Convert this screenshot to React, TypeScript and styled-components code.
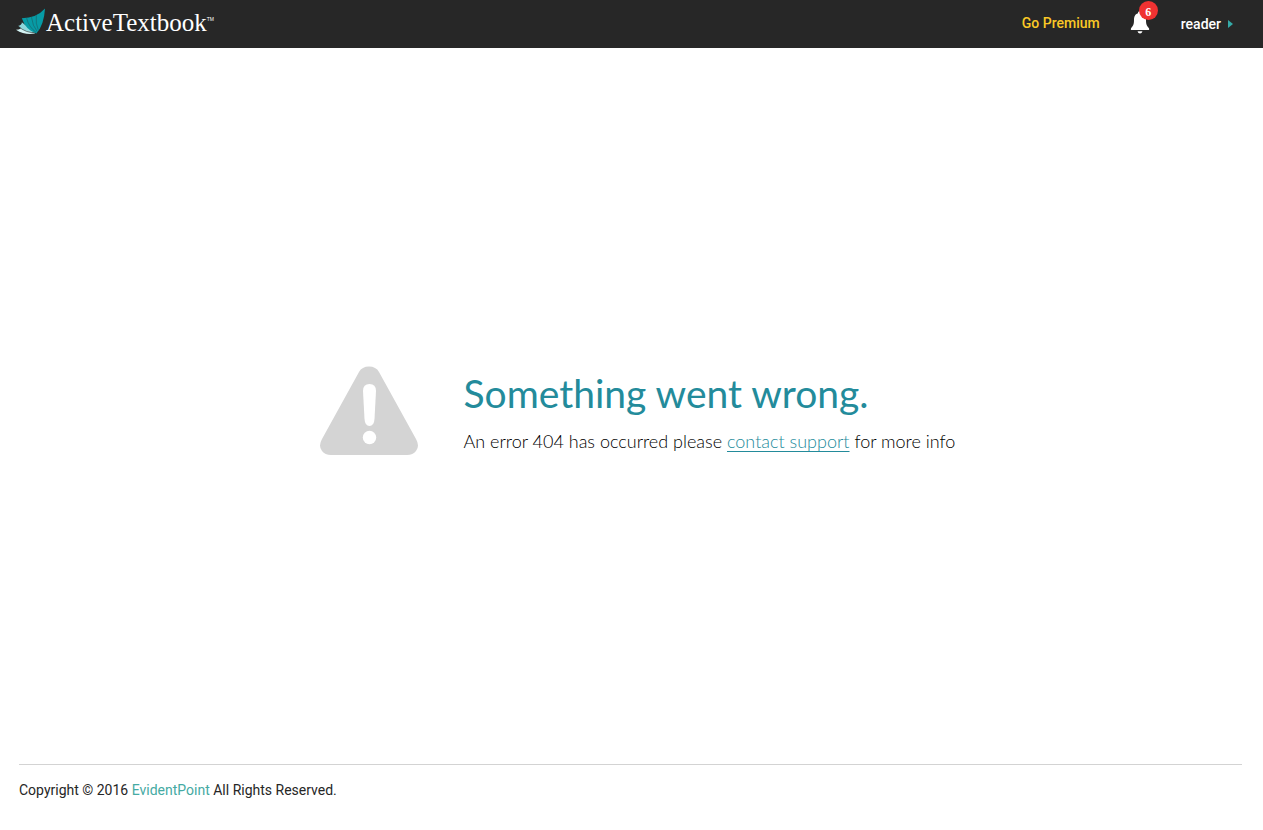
import React from "react";
import styled, { createGlobalStyle } from "styled-components";

const GlobalStyle = createGlobalStyle`
  * { box-sizing: border-box; }
  body {
    margin: 0;
    background: #fff;
    color: #262626;
    font: 14px/20px Roboto, "Liberation Sans", sans-serif;
  }
`;

const Page = styled.div`
  display: flex;
  flex-direction: column;
  min-height: 100vh;
`;

const Header = styled.header`
  display: flex;
  align-items: center;
  justify-content: space-between;
  height: 48px;
  padding: 0 30px 2px 16px;
  background: #272727;
`;

const Brand = styled.a`
  display: flex;
  align-items: center;
  color: #fff;
  font: 25px/32px "Liberation Serif", serif;
  text-decoration: none;

  svg {
    margin-bottom: 2px;
  }
`;

const Trademark = styled.span`
  align-self: flex-start;
  padding-top: 8px;
  font: 5px/8px "Liberation Sans", sans-serif;
`;

const Nav = styled.nav`
  display: flex;
  align-items: center;
`;

const PremiumLink = styled.a`
  color: #fbc926;
  font-weight: 500;
  text-decoration: none;
`;

const BellButton = styled.button`
  position: relative;
  display: block;
  margin: 0 31px 2px 30px;
  padding: 0;
  border: 0;
  background: none;
  line-height: 0;
`;

const Badge = styled.span`
  position: absolute;
  top: -9px;
  left: 9px;
  width: 19px;
  height: 19px;
  border-radius: 50%;
  background: #f03232;
  color: #fff;
  font: bold 12px/22px "Liberation Serif", serif;
  text-align: center;
`;

const UserButton = styled.button`
  display: flex;
  align-items: center;
  gap: 7px;
  padding: 2px 0 0;
  border: 0;
  background: none;
  color: #fff;
  font: 500 14px/20px Roboto, "Liberation Sans", sans-serif;
`;

const Main = styled.main`
  display: flex;
  flex: 1;
  align-items: center;
  justify-content: center;
  padding: 9px 0 0 26px;
`;

const Notice = styled.section`
  display: flex;
  align-items: center;
  gap: 46px;
  width: 650px;

  > svg {
    flex-shrink: 0;
  }
`;

const Message = styled.div`
  flex: 1;
  color: #000;
  font-family: Lato, "Liberation Sans", sans-serif;
  white-space: nowrap;
`;

const Title = styled.h1`
  margin: 0 0 12px;
  color: #238b9b;
  font-size: 39px;
  font-weight: 400;
  line-height: 48px;
`;

const Detail = styled.p`
  margin: 0;
  font-size: 18px;
  font-weight: 300;
  line-height: 24px;
`;

const SupportLink = styled.a`
  color: #238b9b;
  text-decoration: underline 1px;
  text-decoration-skip-ink: none;
  text-underline-offset: 3px;
`;

const Footer = styled.footer`
  margin: 0 21px 0 19px;
  padding: 15px 0 30px;
  border-top: 1px solid #d3d3d3;
`;

const CompanyLink = styled.a`
  color: #45aaa3;
  text-decoration: none;
`;

function PagesLogo() {
  return (
    <svg width="30" height="28" viewBox="0 0 31 28" aria-hidden="true">
      <path d="M0 22Q6 22 6 18L13 23L20 26Q9 28 0 22Z" fill="#d5f4f4" />
      <path d="M2 18Q6 17 6 14L14 20L22 25Q10 26 2 18Z" fill="#8ed8dc" stroke="#272727" strokeWidth="0.6" />
      <path d="M6 10Q21 10 30 0Q29 17 21 26Q10 22 6 10Z" fill="#079ba5" />
      <path d="M11 10Q13 19 21 25M16 9Q17 18 22 24M21 7Q20 16 23 22" fill="none" stroke="#17656c" strokeWidth="0.7" />
    </svg>
  );
}

function Bell() {
  return (
    <svg width="20" height="24" viewBox="0 0 20 24" aria-hidden="true">
      <path d="M10 1C8.7 1 8 2 8 3.2C4.8 4.3 4 7 4 10C4 14.5 3 16.2 1.2 18Q0 20 2 20H18Q20 20 18.8 18C17 16.2 16 14.5 16 10C16 7 15.2 4.3 12 3.2C12 2 11.3 1 10 1Z" fill="#fff" />
      <path d="M7.5 21.2H12.5Q11.8 23.5 10 23.5T7.5 21.2Z" fill="#fff" />
    </svg>
  );
}

function Warning() {
  return (
    <svg width="98" height="90" viewBox="0 0 98 90" role="img" aria-label="Warning">
      <path d="M39 6Q42 .5 49 .5T59 6L96 73Q100 80 96 85Q93 89 87 89H11Q5 89 2 85Q-2 80 2 73Z" fill="#d4d4d4" />
      <path d="M43 25Q43 18 49.5 18T56 25L54.5 53Q54 60 49.5 60T44.5 53Z" fill="#fff" />
      <circle cx="49.5" cy="71.5" r="6.7" fill="#fff" />
    </svg>
  );
}

export default function App() {
  return (
    <Page>
      <GlobalStyle />
      <Header>
        <Brand href="#home">
          <PagesLogo />
          ActiveTextbook
          <Trademark>TM</Trademark>
        </Brand>
        <Nav>
          <PremiumLink href="#premium">Go Premium</PremiumLink>
          <BellButton type="button" aria-label="Notifications">
            <Bell />
            <Badge>6</Badge>
          </BellButton>
          <UserButton type="button">
            reader
            <svg width="5" height="8" viewBox="0 0 5 8" aria-hidden="true">
              <path d="M0 0L5 4L0 8Z" fill="#35aaa7" />
            </svg>
          </UserButton>
        </Nav>
      </Header>
      <Main>
        <Notice>
          <Warning />
          <Message>
            <Title>Something went wrong.</Title>
            <Detail>
              An error 404 has occurred please{" "}
              <SupportLink href="#support">contact support</SupportLink> for more info
            </Detail>
          </Message>
        </Notice>
      </Main>
      <Footer>
        Copyright © 2016 <CompanyLink href="#company">EvidentPoint</CompanyLink> All Rights Reserved.
      </Footer>
    </Page>
  );
}
